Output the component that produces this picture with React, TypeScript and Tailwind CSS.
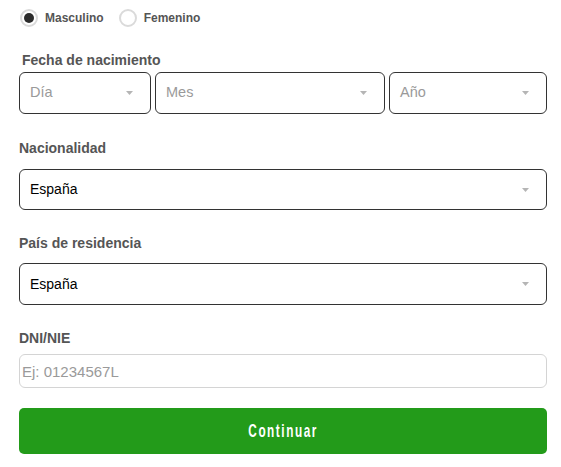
import { useState } from "react";

const font = { fontFamily: '"Liberation Sans", Arial, sans-serif' };

function Arrow() {
  return (
    <svg width="7" height="4" viewBox="0 0 7 4" className="shrink-0">
      <path d="M0 0 L7 0 L3.5 4 Z" fill="#b5b5b5" />
    </svg>
  );
}

function SelectBox({ value, placeholder, className = "", h = "h-[42px]" }: { value?: string; placeholder?: string; className?: string; h?: string }) {
  return (
    <div
      className={`flex items-center justify-between rounded-[6px] border-[1.5px] border-[#333] bg-white pl-[10px] pr-[17px] ${h} ${className}`}
    >
      {value ? (
        <span className="text-[14px] text-black">{value}</span>
      ) : (
        <span className="text-[14.5px] text-[#9a9a9a]">{placeholder}</span>
      )}
      <Arrow />
    </div>
  );
}

function Label({ children, className = "" }: { children: string; className?: string }) {
  return <div className={`text-[14px] font-bold text-[#555] leading-none ${className}`}>{children}</div>;
}

export default function App() {
  const [gender, setGender] = useState("m");

  return (
    <div className="bg-white w-[561px] h-[467px] pl-[19px] pr-[14px] pt-[9px]" style={font}>
      {/* Sexo */}
      <div className="flex items-center h-[18px]">
        {[
          { id: "m", label: "Masculino" },
          { id: "f", label: "Femenino" },
        ].map((o) => (
          <button key={o.id} type="button" onClick={() => setGender(o.id)} className="flex items-center mr-[14px]">
            <span className="ml-[1px] flex items-center justify-center w-[18px] h-[18px] rounded-full border-2 border-[#dadada] bg-white">
              {gender === o.id && <span className="w-[10px] h-[10px] rounded-full bg-[#2b2b2b]" />}
            </span>
            <span className="ml-[7px] text-[12px] font-bold text-[#555]">{o.label}</span>
          </button>
        ))}
      </div>

      <Label className="mt-[26px] ml-[3px]">Fecha de nacimiento</Label>
      <div className="flex gap-[4px] mt-[5px]">
        <SelectBox placeholder="Día" className="w-[132px]" />
        <SelectBox placeholder="Mes" className="flex-1" />
        <SelectBox placeholder="Año" className="w-[158px]" />
      </div>

      <Label className="mt-[27px]">Nacionalidad</Label>
      <SelectBox value="España" className="mt-[14px]" h="h-[41px]" />

      <Label className="mt-[26px]">País de residencia</Label>
      <SelectBox value="España" className="mt-[13px]" />

      <Label className="mt-[26px]">DNI/NIE</Label>
      <input
        placeholder="Ej: 01234567L"
        className="mt-[9px] block w-full h-[34px] rounded-[6px] border border-[#d4d4d4] px-[2px] text-[15px] text-black placeholder:text-[#9a9a9a] outline-none"
        style={font}
      />

      <button
        type="button"
        className="mt-[20px] w-full h-[46px] rounded-[5px] bg-[#239b1a] text-white flex items-center justify-center"
      >
        <span className="inline-block scale-x-[0.62] text-[19px] font-bold tracking-[2.5px]">Continuar</span>
      </button>
    </div>
  );
}
